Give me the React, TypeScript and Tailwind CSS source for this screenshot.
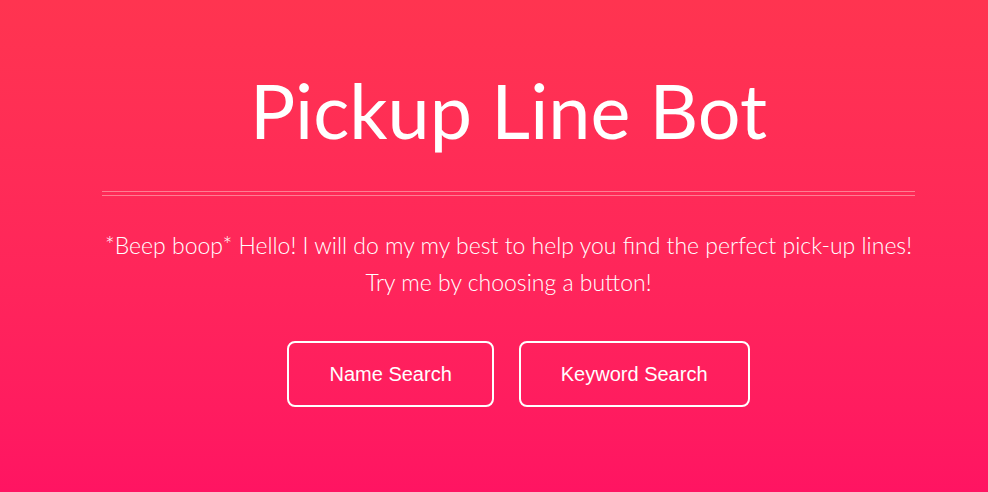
import React from 'react';

const buttons = ['Name Search', 'Keyword Search'];

export default function App() {
  return (
    <div className="w-screen h-screen bg-gradient-to-b from-[#ff3450] to-[#ff1462] flex flex-col items-center">
      <div className="w-[813px] ml-[29px] flex flex-col items-center">
        <h1 className="mt-[62px] text-white text-[75.5px] leading-[96px] font-['Lato',sans-serif] font-normal">
          Pickup Line Bot
        </h1>
        <hr className="w-full mt-[33px] border-t border-b border-[#ff7d92] h-[5px]" />
        <p className="mt-[31px] text-center text-white font-['Lato',sans-serif] font-light text-[23px] leading-[37px]">
          *Beep boop* Hello! I will do my my best to help you find the perfect pick-up lines!
          <br />
          Try me by choosing a button!
        </p>
        <div className="mt-[40px] ml-[20px] flex gap-[25px]">
          {buttons.map((label) => (
            <button
              key={label}
              className="h-[66px] px-[40px] border-2 border-white rounded-[8px] text-white text-[20px] font-['Liberation_Sans',sans-serif]"
            >
              {label}
            </button>
          ))}
        </div>
      </div>
    </div>
  );
}
